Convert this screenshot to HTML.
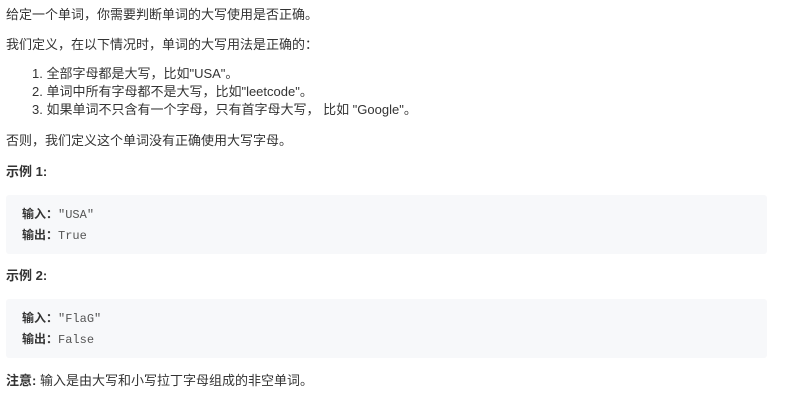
<!DOCTYPE html>
<html><head><meta charset="utf-8"><style>
body{margin:0;background:#fff;width:792px;height:402px;overflow:hidden;font-family:"Liberation Sans","Noto Sans CJK SC",sans-serif;font-size:13px;color:#333;}
.l{position:absolute;left:6px;white-space:nowrap;line-height:18px;}
.b{font-weight:bold;}
.pre{position:absolute;left:6px;width:761px;height:59px;background:#f7f8fa;border-radius:3px;}
.pre div{position:absolute;left:16px;line-height:18px;white-space:nowrap;font-size:12px;}
code{font-family:"Liberation Mono",monospace;font-size:12px;color:#555;}
</style></head><body>
<div class="l" style="top:6px">给定一个单词，你需要判断单词的大写使用是否正确。</div>
<div class="l" style="top:36px">我们定义，在以下情况时，单词的大写用法是正确的：</div>
<div class="l" style="top:65px;left:32px">1. 全部字母都是大写，比如"USA"。</div>
<div class="l" style="top:83px;left:32px">2. 单词中所有字母都不是大写，比如"leetcode"。</div>
<div class="l" style="top:101px;left:32px">3. 如果单词不只含有一个字母，只有首字母大写， 比如 "Google"。</div>
<div class="l" style="top:132px">否则，我们定义这个单词没有正确使用大写字母。</div>
<div class="l b" style="top:163px">示例 1:</div>
<div class="pre" style="top:195px"><div style="top:10px"><b>输入：</b><code>"USA"</code></div><div style="top:31px"><b>输出：</b><code>True</code></div></div>
<div class="l b" style="top:267px">示例 2:</div>
<div class="pre" style="top:299px"><div style="top:10px"><b>输入：</b><code>"FlaG"</code></div><div style="top:31px"><b>输出：</b><code>False</code></div></div>
<div class="l" style="top:372px"><b>注意:</b> 输入是由大写和小写拉丁字母组成的非空单词。</div>
</body></html>
